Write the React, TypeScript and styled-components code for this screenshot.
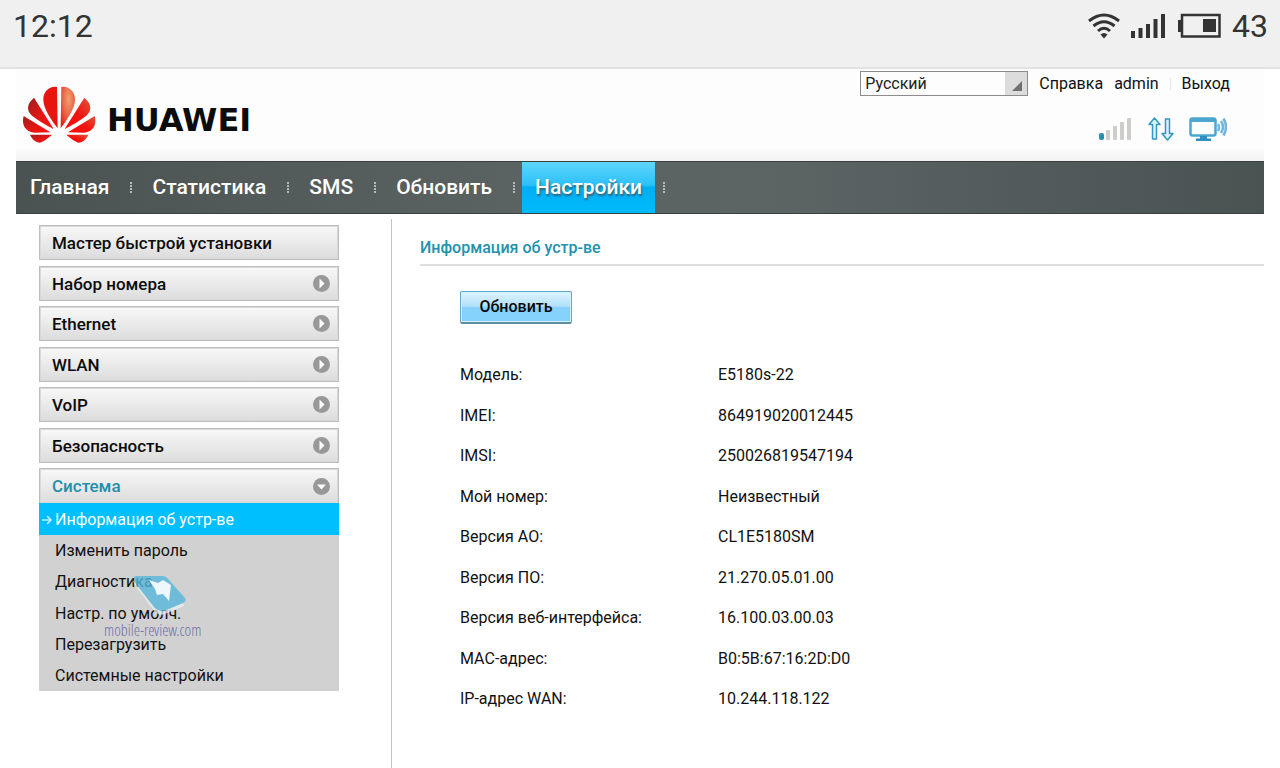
import React from "react";
import styled, { createGlobalStyle, css } from "styled-components";

const GlobalStyle = createGlobalStyle`
  *, *::before, *::after { box-sizing: border-box; }
  body {
    margin: 0;
    background: #fff;
    color: #111;
    font: 400 16px/20px Roboto, "Liberation Sans", sans-serif;
  }
  a { color: inherit; text-decoration: none; }
  ul { list-style: none; margin: 0; padding: 0; }
`;

const Screen = styled.div`
  min-height: 100vh;
  display: flex;
  flex-direction: column;
`;

const StatusBar = styled.div`
  display: flex;
  justify-content: space-between;
  align-items: flex-start;
  height: 69px;
  padding: 8px 12px 8px 13px;
  background: #f0f0f0;
  border-bottom: 2px solid #e2e2e2;
  color: #333;
  font-size: 32px;
  line-height: 36px;
`;

const StatusIcons = styled.div`
  display: flex;
  align-items: center;
  gap: 11px;
`;

const Page = styled.div`
  flex: 1;
  display: flex;
  flex-direction: column;
  padding: 0 16px;
`;

const Header = styled.header`
  display: flex;
  justify-content: space-between;
  height: 92px;
  background: linear-gradient(#fdfdfd 85%, #f2f2f2);
`;

const Brand = styled.a`
  display: flex;
  align-items: center;
  gap: 10px;
  padding: 0 0 2px 6px;
`;

const BrandName = styled.span`
  color: #0c0c0c;
  font: 700 32px/36px "DejaVu Sans", sans-serif;
  padding-top: 12px;
`;

const Tools = styled.div`
  display: flex;
  flex-direction: column;
  align-items: flex-end;
  gap: 21px;
  padding: 2px 34px 0 0;
`;

const Links = styled.div`
  display: flex;
  align-items: center;
  gap: 11px;
`;

const LinkDivider = styled.span`
  width: 1px;
  height: 12px;
  background: #e8e8e8;
`;

const SelectBox = styled.label`
  position: relative;
  display: block;
  width: 168px;
`;

const Select = styled.select`
  appearance: none;
  display: block;
  width: 100%;
  height: 25px;
  padding: 0 26px 0 4px;
  border: 1px solid #8c8c8c;
  border-radius: 0;
  background: #fdfdfd;
  color: #222;
  font: 400 16px/20px Roboto, sans-serif;
`;

const SelectArrow = styled.span`
  position: absolute;
  top: 1px;
  right: 1px;
  bottom: 1px;
  width: 22px;
  background: #dcdcdc;
  pointer-events: none;

  &::after {
    content: "";
    position: absolute;
    right: 5px;
    bottom: 4px;
    border-left: 10px solid transparent;
    border-bottom: 10px solid #707070;
  }
`;

const Indicators = styled.div`
  display: flex;
  align-items: center;
  gap: 15px;
  padding-right: 3px;
`;

const Nav = styled.nav`
  display: flex;
  height: 53px;
  padding-left: 1px;
  border: solid #39413f;
  border-width: 1px 0;
  background: linear-gradient(90deg, #4a5252, #5a6262 40%, #5c6464 60%, #495352);
`;

const NavLink = styled.a<{ $active?: boolean }>`
  padding: 0 13px;
  color: #fff;
  font-size: 21px;
  font-weight: 500;
  line-height: 50px;
  ${(p) =>
    p.$active &&
    css`
      background: linear-gradient(#5fd6fb, #2cc0fa 45%, #00adf5 50%, #00bbfb);
      text-shadow: 1px 2px 2px #35606f;
    `}
`;

const NavDots = styled.span`
  width: 17px;
  display: flex;
  align-items: center;
  justify-content: center;

  &::after {
    content: "";
    width: 2px;
    height: 11px;
    background: repeating-linear-gradient(#b4b9b9 0 2px, transparent 2px 3px);
  }
`;

const Body = styled.div`
  flex: 1;
  display: flex;
  padding-top: 5px;
`;

const Sidebar = styled.aside`
  flex: none;
  width: 376px;
  padding: 6px 52px 24px 23px;
  border-right: 1px solid #c4c4c4;
`;

const MenuItem = styled.li`
  position: relative;
  margin-bottom: 5px;
  &:nth-child(odd) { margin-bottom: 6px; }
`;

const MenuButton = styled.button<{ $open?: boolean }>`
  display: flex;
  align-items: center;
  justify-content: space-between;
  width: 100%;
  height: 35px;
  padding: 0 8px 0 12px;
  border: 1px solid #bdbdbd;
  border-bottom-width: ${(p) => (p.$open ? 0 : 1)}px;
  background: linear-gradient(#f8f8f8, #dcdcdc);
  box-shadow: inset 0 0 0 1px #d9d9d9;
  color: ${(p) => (p.$open ? "#1f8fae" : "#0c0c0c")};
  font: 500 17px/20px Roboto, sans-serif;
  text-align: left;
`;

const SubMenu = styled.ul`
  background: #d1d1d1;

  li { height: 31px; }
  li:nth-child(3n + 1) { height: 32px; }
`;

const SubLink = styled.a<{ $active?: boolean }>`
  display: flex;
  align-items: center;
  gap: 2px;
  height: 100%;
  padding-top: 1px;
  padding-left: ${(p) => (p.$active ? 2 : 16)}px;
  ${(p) => p.$active && "background: #00bfff; color: #fff;"}
`;

const Watermark = styled.div`
  position: absolute;
  left: 65px;
  bottom: 53px;
  color: #7070a8;
  font: 300 16px/16px "Open Sans Condensed Light", "Roboto Condensed", "Open Sans Condensed", sans-serif;
  pointer-events: none;

  svg { display: block; margin-left: 24px; }
`;

const Content = styled.main`
  flex: 1;
  padding-left: 28px;
`;

const Title = styled.h1`
  margin: 0;
  padding: 19px 0 6px;
  border-bottom: 2px solid #dedede;
  color: #2191ae;
  font-size: 16px;
  font-weight: 500;
  line-height: 20px;
`;

const Panel = styled.div`
  padding: 25px 40px;
`;

const RefreshButton = styled.button`
  display: block;
  width: 112px;
  height: 33px;
  padding: 0 0 1px;
  border: 1px solid #62a8c8;
  border-bottom: 2px solid #5f8da3;
  border-radius: 2px;
  background: linear-gradient(#dff3fe, #b0e0fb 48%, #86d1fa 52%, #84d3fc);
  box-shadow: inset 0 0 0 1px #d2effd;
  color: #0a0a0a;
  font: 500 16px/20px Roboto, sans-serif;
`;

const InfoTable = styled.table`
  width: 100%;
  margin-top: 31px;
  border-collapse: collapse;

  th, td { height: 40px; padding: 0; font-weight: 400; text-align: left; }
  tr:nth-child(even) > * { height: 41px; }
  th { width: 258px; }
`;

const navItems = ["Главная", "Статистика", "SMS", "Обновить", "Настройки"];
const menuItems = ["Мастер быстрой установки", "Набор номера", "Ethernet", "WLAN", "VoIP", "Безопасность"];
const systemItems = [
  "Информация об устр-ве",
  "Изменить пароль",
  "Диагностика",
  "Настр. по умолч.",
  "Перезагрузить",
  "Системные настройки",
];
const info = [
  ["Модель:", "E5180s-22"],
  ["IMEI:", "864919020012445"],
  ["IMSI:", "250026819547194"],
  ["Мой номер:", "Неизвестный"],
  ["Версия АО:", "CL1E5180SM"],
  ["Версия ПО:", "21.270.05.01.00"],
  ["Версия веб-интерфейса:", "16.100.03.00.03"],
  ["MAC-адрес:", "B0:5B:67:16:2D:D0"],
  ["IP-адрес WAN:", "10.244.118.122"],
];

const WifiIcon = () => (
  <svg width="32" height="26" viewBox="0 0 32 26" fill="none" stroke="#333" strokeWidth="3">
    <path d="M1 8Q16 -4 31 8" />
    <path d="M5.500 13Q16 4.500 26.500 13" />
    <path d="M10 18Q16 12.500 22 18" />
    <path d="M12.500 21.500Q16 18.500 19.500 21.500L16 25.500Z" fill="#333" stroke="none" />
  </svg>
);

const CellIcon = () => (
  <svg width="36" height="26" viewBox="0 0 36 26" fill="#333">
    <path d="M0 18h4v7h-4zM7.500 15h4v10h-4zM15 11h4v14h-4zM22.500 6h4v19h-4zM30 1h4v24h-4z" />
  </svg>
);

const BatteryIcon = () => (
  <svg width="43" height="26" viewBox="0 0 43 26">
    <path d="M4 2H41.500V23.500H4Z" fill="none" stroke="#333" strokeWidth="2.500" />
    <path d="M0 7h4v12H0zM25 6h13v13H25z" fill="#333" />
  </svg>
);

const Petals = ({ fill, top }: { fill: string; top: string }) => (
  <>
    <path fill={top} d="M182 383L184 259C208 255 226 275 225 298C224 325 200 360 182 383Z" />
    <path fill={fill} d="M194 385L253 291C276 310 276 331 258 346C240 360 215 375 194 385Z" />
    <path fill={fill} d="M204 395L284 346C292 374 276 394 252 396Z" />
    <path fill={fill} d="M199 402L265 402C258 416 249 425 235 426C226 423 210 412 199 402Z" />
  </>
);

const HuaweiLogo = () => (
  <svg width="75" height="57" viewBox="66 256 225 171">
    <defs>
      <linearGradient id="petal-right" x1="1" y1="0" x2="0" y2="1">
        <stop offset="0" stopColor="#e0563c" />
        <stop offset=".5" stopColor="#f01410" />
        <stop offset="1" stopColor="#f80c0c" />
      </linearGradient>
      <radialGradient id="petal-top" cx=".55" cy=".3" r=".75">
        <stop offset="0" stopColor="#f0a070" />
        <stop offset=".5" stopColor="#ea6a48" />
        <stop offset="1" stopColor="#e62218" />
      </radialGradient>
      <linearGradient id="petal-left" x1="1" y1="0" x2="0" y2="1">
        <stop offset="0" stopColor="#9a2020" />
        <stop offset=".5" stopColor="#e01614" />
        <stop offset="1" stopColor="#fa1010" />
      </linearGradient>
    </defs>
    <Petals fill="url(#petal-right)" top="url(#petal-top)" />
    <g transform="matrix(-1 0 0 1 355 0)">
      <Petals fill="url(#petal-left)" top="#e8140f" />
    </g>
  </svg>
);

const SignalIcon = () => (
  <svg width="34" height="24" viewBox="0 0 34 24" fill="#cdcdcb">
    <rect x="0" y="16" width="5" height="7" rx="2" fill="#2a8caf" />
    <rect x="7" y="13" width="4" height="10" rx="1" />
    <rect x="14" y="9" width="4" height="14" rx="1" />
    <rect x="21" y="5" width="4" height="18" rx="1" />
    <rect x="28" y="1" width="4" height="22" rx="1" />
  </svg>
);

const TrafficIcon = () => (
  <svg width="26" height="24" viewBox="0 0 26 24" fill="#d8f2fd" stroke="#3597bd" strokeWidth="1.500" strokeLinejoin="round">
    <path d="M6.500 1L12 7.500H8.500V22H4.500V7.500H1Z" />
    <path d="M19.500 23L25 16.500H21.500V2H17.500V16.500H14Z" />
  </svg>
);

const MonitorIcon = () => (
  <svg width="38" height="24" viewBox="0 0 38 24" fill="none" stroke="#4aa6ce">
    <rect x="1.500" y="1.500" width="25" height="17" rx="2" fill="#fafdff" strokeWidth="2.500" />
    <path d="M2 2H26V5H2Z" fill="#4aa6ce" stroke="none" />
    <path d="M11 19h7v2.500h4V24H7v-2.500h4Z" fill="#2e8fc0" stroke="none" />
    <path d="M29 7q2 3 0 7M32 4q4 6 0 12M34.500 1.500q5 8.500 0 17" stroke="#6db6dc" strokeWidth="2.500" />
  </svg>
);

const CircleIcon = ({ open }: { open?: boolean }) => (
  <svg width="17" height="17" viewBox="0 0 17 17">
    <circle cx="8.500" cy="8.500" r="8.500" fill="#989898" />
    <path d={open ? "M4 6.500H13L8.500 11.500Z" : "M6.500 3.500L11.500 8.500L6.500 13.500Z"} fill="#fff" />
  </svg>
);

const ArrowIcon = () => (
  <svg width="12" height="10" viewBox="0 0 12 10" fill="none" stroke="#c5f0ff" strokeWidth="1.500">
    <path d="M1 5H10M6 1L10 5L6 9" />
  </svg>
);

const WatermarkLogo = () => (
  <svg width="62" height="48" viewBox="0 0 62 48">
    <path d="M4 5L7 11L27 38Q31 42 37 40L56 32L55 29L35 37L27 35Z" fill="#edf3f6" opacity=".7" />
    <path d="M6 5Q5 2 9 2H34Q38 2 41 6L57 24Q59 27 55 29L36 37Q31 38 27 34L8 10Z" fill="#55b6dc" opacity=".8" />
    <path d="M21 6L30 9L35 6L43 11L41 27L35 20L29 21L27 15Z" fill="#eef7fb" />
  </svg>
);

export default function App() {
  return (
    <Screen>
      <GlobalStyle />
      <StatusBar>
        <span>12:12</span>
        <StatusIcons>
          <WifiIcon />
          <CellIcon />
          <BatteryIcon />
          <span>43</span>
        </StatusIcons>
      </StatusBar>
      <Page>
        <Header>
          <Brand href="#" aria-label="HUAWEI">
            <HuaweiLogo />
            <BrandName>HUAWEI</BrandName>
          </Brand>
          <Tools>
            <Links>
              <SelectBox>
                <Select aria-label="Язык" defaultValue="ru">
                  <option value="ru">Русский</option>
                </Select>
                <SelectArrow />
              </SelectBox>
              <a href="#">Справка</a>
              <a href="#">admin</a>
              <LinkDivider />
              <a href="#">Выход</a>
            </Links>
            <Indicators>
              <SignalIcon />
              <TrafficIcon />
              <MonitorIcon />
            </Indicators>
          </Tools>
        </Header>
        <Nav>
          {navItems.map((label) => (
            <React.Fragment key={label}>
              <NavLink href="#" $active={label === "Настройки"}>
                {label}
              </NavLink>
              <NavDots />
            </React.Fragment>
          ))}
        </Nav>
        <Body>
          <Sidebar>
            <ul>
              {menuItems.map((label, i) => (
                <MenuItem key={label}>
                  <MenuButton type="button">
                    {label}
                    {i > 0 && <CircleIcon />}
                  </MenuButton>
                </MenuItem>
              ))}
              <MenuItem>
                <MenuButton type="button" $open>
                  Система
                  <CircleIcon open />
                </MenuButton>
                <SubMenu>
                  {systemItems.map((label, i) => (
                    <li key={label}>
                      <SubLink href="#" $active={i === 0}>
                        {i === 0 && <ArrowIcon />}
                        {label}
                      </SubLink>
                    </li>
                  ))}
                </SubMenu>
                <Watermark>
                  <WatermarkLogo />
                  mobile-review.com
                </Watermark>
              </MenuItem>
            </ul>
          </Sidebar>
          <Content>
            <Title>Информация об устр-ве</Title>
            <Panel>
              <RefreshButton type="button">Обновить</RefreshButton>
              <InfoTable>
                <tbody>
                  {info.map(([label, value]) => (
                    <tr key={label}>
                      <th scope="row">{label}</th>
                      <td>{value}</td>
                    </tr>
                  ))}
                </tbody>
              </InfoTable>
            </Panel>
          </Content>
        </Body>
      </Page>
    </Screen>
  );
}
